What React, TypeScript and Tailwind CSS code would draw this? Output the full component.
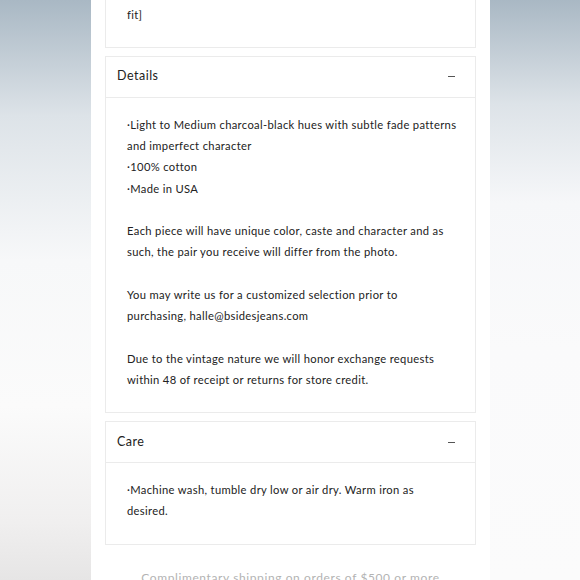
import React from 'react';

const font = { fontFamily: 'Lato, "Open Sans", sans-serif' };

interface SectionProps {
  title: string;
  children: React.ReactNode;
}

const Section: React.FC<SectionProps> = ({ title, children }) => (
  <div className="border border-[#ebebeb] bg-white">
    <div className="h-[41px] flex items-center justify-between pl-[11px] pr-[20px] border-b border-[#ebebeb]">
      <span className="text-[12.5px] text-[#222] tracking-[0.04em]">{title}</span>
      <span className="w-[7px] h-px bg-[#555]" />
    </div>
    <div className="pl-[21px] pr-[17px] pt-[16px] pb-[22px] text-[11.2px] leading-[21.25px] text-[#222] tracking-[0.03em]">
      {children}
    </div>
  </div>
);

export default function App() {
  return (
    <div
      className="w-[580px] h-[580px] overflow-hidden flex bg-[linear-gradient(180deg,#a9b8c4_0%,#dde3e8_20%,#f7f8f9_45%,#fbfbfb_70%,#f0efef_90%,#e6e5e5_100%)]"
      style={font}
    >
      <div className="w-[91px]" />
      <div className="w-[399px] bg-white flex flex-col gap-[8px] px-[14px] mt-[-17.5px]">
        <div className="border border-[#ebebeb] border-t-0 bg-white pl-[21px] pt-[21px] pb-[22px] text-[11.2px] leading-[21.25px] text-[#222] tracking-[0.03em]">
          fit]
        </div>
        <Section title="Details">
          <div>·Light to Medium charcoal-black hues with subtle fade patterns and imperfect character</div>
          <div>·100% cotton</div>
          <div>·Made in USA</div>
          <div className="h-[21.25px]" />
          <div>Each piece will have unique color, caste and character and as such, the pair you receive will differ from the photo.</div>
          <div className="h-[21.25px]" />
          <div>You may write us for a customized selection prior to purchasing, halle@bsidesjeans.com</div>
          <div className="h-[21.25px]" />
          <div>Due to the vintage nature we will honor exchange requests within 48 of receipt or returns for store credit.</div>
        </Section>
        <Section title="Care">
          <div>·Machine wash, tumble dry low or air dry. Warm iron as desired.</div>
        </Section>
        <div className="pt-[16px] text-center text-[12px] text-[#b3b3b3] tracking-[0.05em]">
          Complimentary shipping on orders of $500 or more
        </div>
      </div>
      <div className="flex-1 bg-[linear-gradient(180deg,#a9b8c4_0%,#dde3e8_18%,#f6f7f9_35%,#fafafb_60%,#fbfbfb_100%)]" />
    </div>
  );
}
